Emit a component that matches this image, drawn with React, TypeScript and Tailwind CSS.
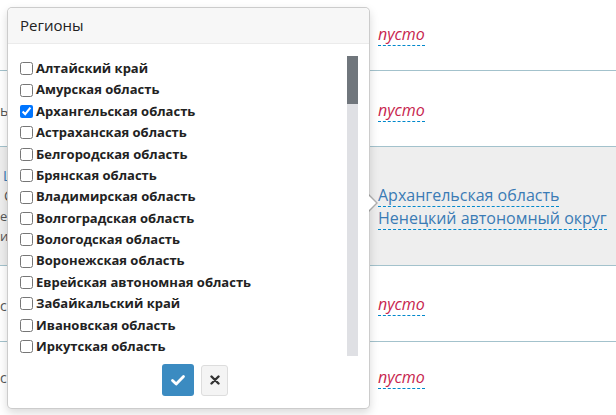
const regions = [
  { name: "Алтайский край", checked: false },
  { name: "Амурская область", checked: false },
  { name: "Архангельская область", checked: true },
  { name: "Астраханская область", checked: false },
  { name: "Белгородская область", checked: false },
  { name: "Брянская область", checked: false },
  { name: "Владимирская область", checked: false },
  { name: "Волгоградская область", checked: false },
  { name: "Вологодская область", checked: false },
  { name: "Воронежская область", checked: false },
  { name: "Еврейская автономная область", checked: false },
  { name: "Забайкальский край", checked: false },
  { name: "Ивановская область", checked: false },
  { name: "Иркутская область", checked: false },
];

function Empty() {
  return (
    <span className="border-b border-dashed border-[#0088cc] italic text-[#c7254e]">
      пусто
    </span>
  );
}

export default function App() {
  return (
    <div
      className="relative h-[415px] w-[616px] overflow-hidden bg-white text-[16px] text-[#333]"
      style={{ fontFamily: '"Open Sans", "Noto Sans", sans-serif' }}
    >
      {/* Table behind the popover */}
      <div className="flex h-[71px] items-center border-b border-[#a3c2cc]">
        <div className="w-[378px] shrink-0" />
        <div className="-mt-[3px]">
          <Empty />
        </div>
      </div>
      <div className="flex h-[76px] items-center border-b border-[#a3c2cc]">
        <div className="mt-[3px] w-[378px] shrink-0 whitespace-nowrap text-[14px] text-[#555]">
          ь
        </div>
        <div className="mt-[3px]">
          <Empty />
        </div>
      </div>
      <div className="flex h-[119px] items-center border-b border-[#a3c2cc] bg-[#eeeeee]">
        <div className="flex w-[378px] shrink-0 flex-col whitespace-nowrap pl-[3px] text-[14px] leading-[20px] text-[#555]">
          <span className="text-[#3a7bb5]">Ц</span>
          <span className="pl-[1px]">С</span>
          <span className="-ml-[3px] text-[13px]">ел</span>
          <span className="-ml-[3px] text-[13px]">ин</span>
        </div>
        <div className="flex flex-col pt-[1px] leading-[22px] text-[#3a7bb5]">
          <span className="self-start border-b border-dashed border-[#0088cc]">
            Архангельская область
          </span>
          <span className="self-start border-b border-dashed border-[#0088cc]">
            Ненецкий автономный округ
          </span>
        </div>
      </div>
      <div className="flex h-[76px] items-center border-b border-[#a3c2cc]">
        <div className="mt-[4px] w-[378px] shrink-0 whitespace-nowrap text-[14px] text-[#555]">
          ск
        </div>
        <div className="mt-[1px]">
          <Empty />
        </div>
      </div>
      <div className="flex h-[73px] items-center">
        <div className="-mt-[3px] w-[378px] shrink-0 whitespace-nowrap text-[14px] text-[#555]">
          сі
        </div>
        <div className="-mt-[3px]">
          <Empty />
        </div>
      </div>

      {/* Popover */}
      <div className="absolute left-[7px] top-[7px] flex h-[402px] w-[363px] flex-col rounded-[5px] border border-black/20 bg-white shadow-[0_4px_10px_rgba(0,0,0,0.15)]">
        {/* arrow */}
        <div className="absolute left-full top-[186px] h-0 w-0 border-y-[9px] border-l-[9px] border-y-transparent border-l-black/25" />
        <div className="absolute left-[calc(100%-1px)] top-[187px] h-0 w-0 border-y-[8px] border-l-[8px] border-y-transparent border-l-white" />

        <div className="flex h-[36px] items-center rounded-t-[5px] border-b border-[#ebebeb] bg-[#f7f7f7] px-[12px] text-[15px] text-[#222]">
          Регионы
        </div>

        <div className="mt-[12px] flex h-[300px] pl-[12px] pr-[11px]">
          <ul className="flex-1 overflow-hidden pt-[2px]">
            {regions.map((r) => (
              <li
                key={r.name}
                className="flex h-[21.4px] items-center gap-[3px] whitespace-nowrap text-[13px] font-bold text-[#222]"
              >
                <input
                  type="checkbox"
                  defaultChecked={r.checked}
                  className="m-0 h-[13px] w-[13px] shrink-0"
                />
                {r.name}
              </li>
            ))}
          </ul>
          <div className="flex w-[11px] shrink-0 flex-col bg-[#dfe0e4]">
            <div className="h-[48px] bg-[#70767c]" />
          </div>
        </div>

        <div className="mt-[8px] flex items-center gap-[7px] pl-[154px]">
          <button className="flex h-[32px] w-[32px] items-center justify-center rounded-[3px] bg-[#3b8bc1]">
            <svg width="16" height="16" viewBox="0 0 16 16">
              <path
                d="M2.5 8.5 L6.2 12 L13.5 4.5"
                fill="none"
                stroke="white"
                strokeWidth="2.8"
                strokeLinecap="round"
                strokeLinejoin="round"
              />
            </svg>
          </button>
          <button className="flex h-[31px] w-[27px] items-center justify-center rounded-[3px] border border-[#dddddd] bg-[#f4f4f4]">
            <svg width="10" height="10" viewBox="0 0 10 10">
              <path
                d="M1.5 1.5 L8.5 8.5 M8.5 1.5 L1.5 8.5"
                stroke="#333"
                strokeWidth="2.4"
                strokeLinecap="round"
              />
            </svg>
          </button>
        </div>
      </div>
    </div>
  );
}
